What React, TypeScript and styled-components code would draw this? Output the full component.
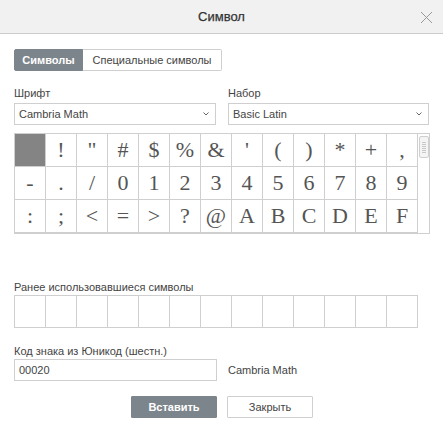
import React from "react";
import styled, { createGlobalStyle } from "styled-components";

const Global = createGlobalStyle`
  html, body { margin: 0; padding: 0; background: #fff; }
  body { font-family: "Liberation Sans", Arial, sans-serif; font-size: 11px; color: #444; }
  * { box-sizing: border-box; }
`;

const Dialog = styled.div`
  width: 443px;
  height: 431px;
  background: #fff;
  display: flex;
  flex-direction: column;
`;

const Header = styled.div`
  height: 34px;
  background: #f1f1f1;
  border-bottom: 1px solid #cbcbcb;
  display: flex;
  align-items: center;
  justify-content: center;
  position: relative;
`;

const Title = styled.div`
  font-size: 13px;
  font-weight: normal;
  color: #333;
  -webkit-text-stroke: 0.25px #333;
`;

const CloseBtn = styled.div`
  position: absolute;
  right: 10px;
  top: 11px;
  width: 13px;
  height: 13px;
  display: flex;
`;

const Body = styled.div`
  padding: 15px 14px 0 14px;
  display: flex;
  flex-direction: column;
`;

const Tabs = styled.div`
  display: flex;
  height: 22px;
`;

const Tab = styled.div<{ $active?: boolean; $w: number }>`
  width: ${(p) => p.$w}px;
  height: 22px;
  display: flex;
  align-items: center;
  justify-content: center;
  font-size: 11px;
  border: 1px solid ${(p) => (p.$active ? "#7d858c" : "#cfcfcf")};
  background: ${(p) => (p.$active ? "#7d858c" : "#fff")};
  color: ${(p) => (p.$active ? "#fff" : "#444")};
  font-weight: ${(p) => (p.$active ? "bold" : "normal")};
  border-radius: ${(p) => (p.$active ? "2px 0 0 2px" : "0 2px 2px 0")};
  ${(p) => (!p.$active ? "border-left: none;" : "")}
`;

const SelectRow = styled.div`
  display: flex;
  gap: 12px;
  margin-top: 15px;
`;

const Field = styled.div<{ $w: number }>`
  width: ${(p) => p.$w}px;
  display: flex;
  flex-direction: column;
`;

const Label = styled.div`
  font-size: 11px;
  line-height: 14px;
  color: #444;
  margin-bottom: 3px;
`;

const SelectBox = styled.div`
  height: 22px;
  border: 1px solid #cfcfcf;
  display: flex;
  align-items: center;
  justify-content: space-between;
  padding: 0 6px 0 4px;
  font-size: 11px;
  color: #444;
`;

const Grid = styled.div`
  margin-top: 8px;
  width: 416px;
  height: 101px;
  border: 1px solid #cfcfcf;
  display: flex;
  overflow: hidden;
`;

const Cells = styled.div`
  width: 403px;
  display: grid;
  grid-template-columns: repeat(13, 31px);
  grid-auto-rows: 33px;
  align-content: start;
`;

const Cell = styled.div<{ $sel?: boolean }>`
  border-right: 1px solid #cfcfcf;
  border-bottom: 1px solid #cfcfcf;
  background: ${(p) => (p.$sel ? "#848484" : "#fff")};
  display: flex;
  align-items: center;
  justify-content: center;
  font-family: "Liberation Serif", "DejaVu Serif", serif;
  font-size: 22px;
  color: #555;
  line-height: 1;
`;

const Track = styled.div`
  flex: 1;
  display: flex;
  justify-content: center;
  padding-top: 2px;
`;

const Thumb = styled.div`
  width: 10px;
  height: 22px;
  border: 1px solid #cfcfcf;
  border-radius: 2px;
  background: #f4f4f4;
  display: flex;
  flex-direction: column;
  align-items: center;
  justify-content: center;
  gap: 1px;
`;

const Grip = styled.div`
  width: 4px;
  height: 1px;
  background: #c8c8c8;
`;

const RecentLabel = styled(Label)`
  margin-top: 46px;
  margin-bottom: 1px;
`;

const RecentRow = styled.div`
  display: flex;
  border-top: 1px solid #cfcfcf;
  border-left: 1px solid #cfcfcf;
  width: 404px;
`;

const RecentCell = styled.div`
  width: 31px;
  height: 32px;
  border-right: 1px solid #cfcfcf;
  border-bottom: 1px solid #cfcfcf;
`;

const CodeLabel = styled(Label)`
  margin-top: 16px;
  margin-bottom: 1px;
`;

const CodeRow = styled.div`
  display: flex;
  align-items: center;
  gap: 11px;
`;

const Input = styled.div`
  width: 203px;
  height: 22px;
  border: 1px solid #cfcfcf;
  padding: 0 4px;
  display: flex;
  align-items: center;
  font-size: 11px;
  color: #444;
`;

const FontName = styled.div`
  font-size: 11px;
  color: #444;
`;

const Footer = styled.div`
  display: flex;
  justify-content: center;
  gap: 10px;
  margin-top: 15px;
  padding-left: 1px;
`;

const Button = styled.div<{ $primary?: boolean }>`
  width: 86px;
  height: 22px;
  display: flex;
  align-items: center;
  justify-content: center;
  font-size: 11px;
  border-radius: 1px;
  border: 1px solid ${(p) => (p.$primary ? "#7d858c" : "#cfcfcf")};
  background: ${(p) => (p.$primary ? "#7d858c" : "#fff")};
  color: ${(p) => (p.$primary ? "#fff" : "#444")};
  font-weight: ${(p) => (p.$primary ? "bold" : "normal")};
`;

const Chevron = () => (
  <svg width="6" height="4" viewBox="0 0 6 4">
    <path d="M0.5 0.5 L3 3 L5.5 0.5" fill="none" stroke="#666" strokeWidth="1" />
  </svg>
);

const chars: string[] = [];
for (let c = 0x20; c <= 0x46; c++) chars.push(String.fromCharCode(c));

export default function App() {
  return (
    <>
      <Global />
      <Dialog>
        <Header>
          <Title>Символ</Title>
          <CloseBtn>
            <svg width="13" height="13" viewBox="0 0 13 13">
              <path d="M1 1 L12 12 M12 1 L1 12" stroke="#999" strokeWidth="1" fill="none" />
            </svg>
          </CloseBtn>
        </Header>
        <Body>
          <Tabs>
            <Tab $active $w={69}>Символы</Tab>
            <Tab $w={139}>Специальные символы</Tab>
          </Tabs>
          <SelectRow>
            <Field $w={203}>
              <Label>Шрифт</Label>
              <SelectBox>
                <span>Cambria Math</span>
                <Chevron />
              </SelectBox>
            </Field>
            <Field $w={202}>
              <Label>Набор</Label>
              <SelectBox>
                <span>Basic Latin</span>
                <Chevron />
              </SelectBox>
            </Field>
          </SelectRow>
          <Grid>
            <Cells>
              {chars.map((ch, i) => (
                <Cell key={i} $sel={i === 0}>
                  {i === 0 ? "" : ch}
                </Cell>
              ))}
            </Cells>
            <Track>
              <Thumb>
                {Array.from({ length: 6 }).map((_, i) => (
                  <Grip key={i} />
                ))}
              </Thumb>
            </Track>
          </Grid>
          <RecentLabel>Ранее использовавшиеся символы</RecentLabel>
          <RecentRow>
            {Array.from({ length: 13 }).map((_, i) => (
              <RecentCell key={i} />
            ))}
          </RecentRow>
          <CodeLabel>Код знака из Юникод (шестн.)</CodeLabel>
          <CodeRow>
            <Input>00020</Input>
            <FontName>Cambria Math</FontName>
          </CodeRow>
          <Footer>
            <Button $primary>Вставить</Button>
            <Button>Закрыть</Button>
          </Footer>
        </Body>
      </Dialog>
    </>
  );
}
